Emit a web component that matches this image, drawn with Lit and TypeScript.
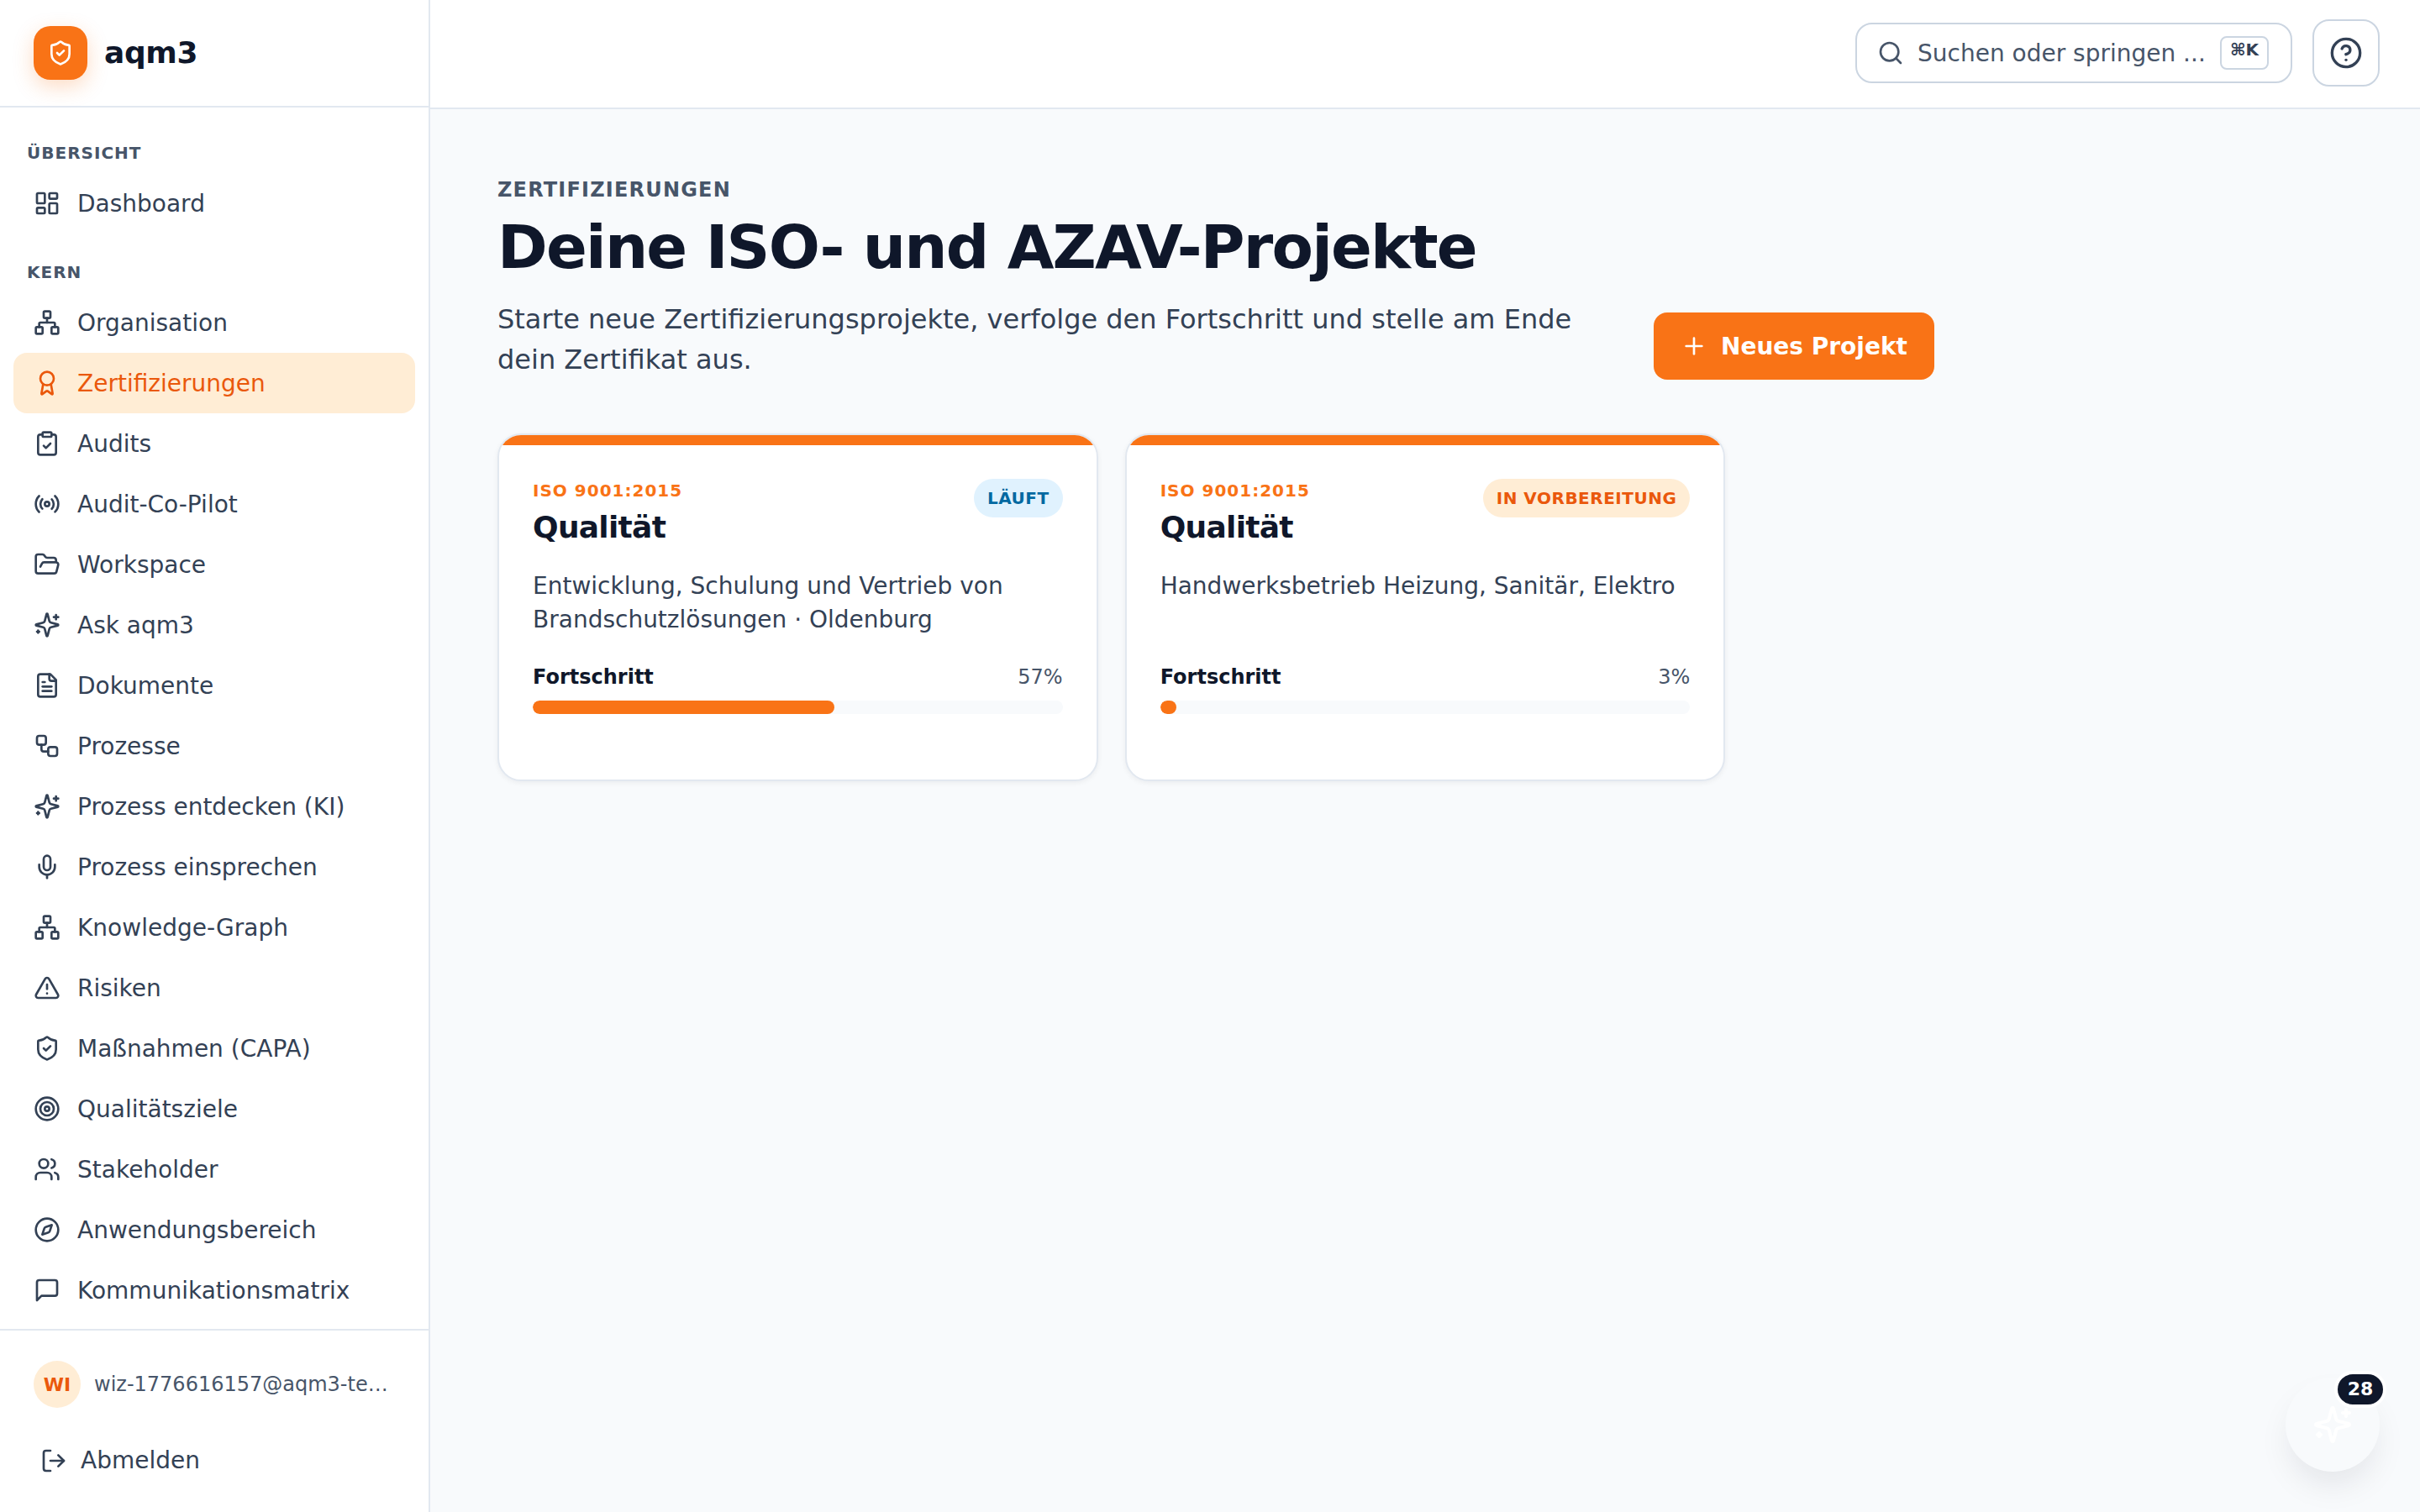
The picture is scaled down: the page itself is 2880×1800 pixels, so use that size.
import { LitElement, html, css, svg } from "lit";
import { customElement } from "lit/decorators.js";

// lucide shapes, keyed by name
const icons: Record<string, unknown> = {
  dashboard: svg`<rect x="3" y="3" width="7" height="9" rx="1"/><rect x="14" y="3" width="7" height="5" rx="1"/><rect x="14" y="12" width="7" height="9" rx="1"/><rect x="3" y="16" width="7" height="5" rx="1"/>`,
  network: svg`<rect x="16" y="16" width="6" height="6" rx="1"/><rect x="2" y="16" width="6" height="6" rx="1"/><rect x="9" y="2" width="6" height="6" rx="1"/><path d="M5 16v-3a1 1 0 0 1 1-1h12a1 1 0 0 1 1 1v3"/><path d="M12 12V8"/>`,
  award: svg`<path d="m15.477 12.89 1.515 8.526a.5.5 0 0 1-.81.47l-3.58-2.687a1 1 0 0 0-1.197 0l-3.586 2.686a.5.5 0 0 1-.81-.469l1.514-8.526"/><circle cx="12" cy="8" r="6"/>`,
  clipboard: svg`<rect x="8" y="2" width="8" height="4" rx="1"/><path d="M16 4h2a2 2 0 0 1 2 2v14a2 2 0 0 1-2 2H6a2 2 0 0 1-2-2V6a2 2 0 0 1 2-2h2"/><path d="m9 14 2 2 4-4"/>`,
  radio: svg`<path d="M4.9 19.1C1 15.2 1 8.8 4.9 4.9"/><path d="M7.8 16.2c-2.3-2.3-2.3-6.1 0-8.5"/><circle cx="12" cy="12" r="2"/><path d="M16.2 7.8c2.3 2.3 2.3 6.1 0 8.5"/><path d="M19.1 4.9C23 8.8 23 15.1 19.1 19"/>`,
  folder: svg`<path d="m6 14 1.5-2.9A2 2 0 0 1 9.24 10H20a2 2 0 0 1 1.94 2.5l-1.54 6a2 2 0 0 1-1.95 1.5H4a2 2 0 0 1-2-2V5a2 2 0 0 1 2-2h3.9a2 2 0 0 1 1.69.9l.81 1.2a2 2 0 0 0 1.67.9H18a2 2 0 0 1 2 2v2"/>`,
  sparkles: svg`<path d="M9.937 15.5A2 2 0 0 0 8.5 14.063l-6.135-1.582a.5.5 0 0 1 0-.962L8.5 9.936A2 2 0 0 0 9.937 8.5l1.582-6.135a.5.5 0 0 1 .963 0L14.063 8.5A2 2 0 0 0 15.5 9.937l6.135 1.581a.5.5 0 0 1 0 .964L15.5 14.063a2 2 0 0 0-1.437 1.437l-1.582 6.135a.5.5 0 0 1-.963 0z"/><path d="M20 3v4"/><path d="M22 5h-4"/><path d="M4 17v2"/><path d="M5 18H3"/>`,
  file: svg`<path d="M15 2H6a2 2 0 0 0-2 2v16a2 2 0 0 0 2 2h12a2 2 0 0 0 2-2V7Z"/><path d="M14 2v4a2 2 0 0 0 2 2h4"/><path d="M10 9H8"/><path d="M16 13H8"/><path d="M16 17H8"/>`,
  workflow: svg`<rect x="3" y="3" width="8" height="8" rx="2"/><path d="M7 11v4a2 2 0 0 0 2 2h4"/><rect x="13" y="13" width="8" height="8" rx="2"/>`,
  mic: svg`<path d="M12 2a3 3 0 0 0-3 3v7a3 3 0 0 0 6 0V5a3 3 0 0 0-3-3Z"/><path d="M19 10v2a7 7 0 0 1-14 0v-2"/><line x1="12" x2="12" y1="19" y2="22"/>`,
  alert: svg`<path d="m21.73 18-8-14a2 2 0 0 0-3.48 0l-8 14A2 2 0 0 0 4 21h16a2 2 0 0 0 1.73-3"/><path d="M12 9v4"/><path d="M12 17h.01"/>`,
  shield: svg`<path d="M20 13c0 5-3.5 7.5-7.66 8.95a1 1 0 0 1-.67-.01C7.5 20.5 4 18 4 13V6a1 1 0 0 1 1-1c2 0 4.5-1.2 6.24-2.72a1.17 1.17 0 0 1 1.52 0C14.51 3.81 17 5 19 5a1 1 0 0 1 1 1z"/><path d="m9 12 2 2 4-4"/>`,
  target: svg`<circle cx="12" cy="12" r="10"/><circle cx="12" cy="12" r="6"/><circle cx="12" cy="12" r="2"/>`,
  users: svg`<path d="M16 21v-2a4 4 0 0 0-4-4H6a4 4 0 0 0-4 4v2"/><circle cx="9" cy="7" r="4"/><path d="M22 21v-2a4 4 0 0 0-3-3.87"/><path d="M16 3.13a4 4 0 0 1 0 7.75"/>`,
  compass: svg`<path d="m16.24 7.76-1.804 5.411a2 2 0 0 1-1.265 1.265L7.76 16.24l1.804-5.411a2 2 0 0 1 1.265-1.265z"/><circle cx="12" cy="12" r="10"/>`,
  message: svg`<path d="M21 15a2 2 0 0 1-2 2H7l-4 4V5a2 2 0 0 1 2-2h14a2 2 0 0 1 2 2z"/>`,
  logout: svg`<path d="M9 21H5a2 2 0 0 1-2-2V5a2 2 0 0 1 2-2h4"/><polyline points="16 17 21 12 16 7"/><line x1="21" x2="9" y1="12" y2="12"/>`,
  search: svg`<circle cx="11" cy="11" r="8"/><path d="m21 21-4.3-4.3"/>`,
  help: svg`<circle cx="12" cy="12" r="10"/><path d="M9.09 9a3 3 0 0 1 5.83 1c0 2-3 3-3 3"/><path d="M12 17h.01"/>`,
  plus: svg`<path d="M5 12h14"/><path d="M12 5v14"/>`,
};

const icon = (name: string, size = 16) => html`<svg
  class="icon"
  width=${size}
  height=${size}
  viewBox="0 0 24 24"
  fill="none"
  stroke="currentColor"
  stroke-width="2"
  stroke-linecap="round"
  stroke-linejoin="round"
>${icons[name]}</svg>`;

const sections = [
  { label: "Übersicht", items: [["Dashboard", "dashboard"]] },
  {
    label: "Kern",
    items: [
      ["Organisation", "network"],
      ["Zertifizierungen", "award"],
      ["Audits", "clipboard"],
      ["Audit-Co-Pilot", "radio"],
      ["Workspace", "folder"],
      ["Ask aqm3", "sparkles"],
      ["Dokumente", "file"],
      ["Prozesse", "workflow"],
      ["Prozess entdecken (KI)", "sparkles"],
      ["Prozess einsprechen", "mic"],
      ["Knowledge-Graph", "network"],
      ["Risiken", "alert"],
      ["Maßnahmen (CAPA)", "shield"],
      ["Qualitätsziele", "target"],
      ["Stakeholder", "users"],
      ["Anwendungsbereich", "compass"],
      ["Kommunikationsmatrix", "message"],
    ],
  },
];

const projects = [
  {
    norm: "ISO 9001:2015",
    title: "Qualität",
    desc: "Entwicklung, Schulung und Vertrieb von Brandschutzlösungen · Oldenburg",
    status: "Läuft",
    tone: "info",
    progress: 57,
  },
  {
    norm: "ISO 9001:2015",
    title: "Qualität",
    desc: "Handwerksbetrieb Heizung, Sanitär, Elektro",
    status: "In Vorbereitung",
    tone: "warn",
    progress: 3,
  },
];

@customElement("app-root")
export class AppRoot extends LitElement {
  static styles = css`
    :host {
      display: grid;
      grid-template-columns: 256px 1fr;
      position: relative;
      zoom: 2;
      width: 1440px;
      height: 900px;
      overflow: hidden;
      background: #f8fafc;
      color: #334155;
      font-family: "DejaVu Sans", sans-serif;
      font-size: 14px;
    }
    .icon {
      flex: none;
      display: block;
    }

    /* sidebar */
    .sidebar {
      display: flex;
      flex-direction: column;
      height: 900px;
      background: #fff;
      border-right: 1px solid #e2e8f0;
      box-sizing: border-box;
    }
    .brand {
      display: flex;
      align-items: center;
      gap: 10px;
      height: 64px;
      flex: none;
      box-sizing: border-box;
      padding: 0 20px;
      border-bottom: 1px solid #e2e8f0;
    }
    .logo {
      display: flex;
      align-items: center;
      justify-content: center;
      width: 32px;
      height: 32px;
      border-radius: 10px;
      background: #f97316;
      color: #fff;
      box-shadow: 0 4px 12px rgba(249, 115, 22, 0.25);
    }
    .brand-name {
      margin-top: -1px;
      font-size: 18px;
      font-weight: 700;
      letter-spacing: -0.01em;
      color: #0f172a;
    }
    .nav {
      flex: 1;
      min-height: 0;
      overflow: hidden;
      padding: 19px 8px 0;
    }
    .section + .section {
      margin-top: 15px;
    }
    .section-label {
      padding: 0 8px;
      height: 16px;
      margin-bottom: 4px;
      line-height: 16px;
      font-size: 10px;
      font-weight: 700;
      letter-spacing: 0.05em;
      text-transform: uppercase;
      color: #475569;
    }
    .item {
      display: flex;
      align-items: center;
      gap: 10px;
      height: 36px;
      padding: 0 12px;
      border-radius: 8px;
      white-space: nowrap;
    }
    .item.active {
      background: #ffedd5;
      color: #ea580c;
    }
    .foot {
      flex: none;
      height: 109px;
      box-sizing: border-box;
      padding: 18px 20px 0;
      border-top: 1px solid #e2e8f0;
    }
    .user {
      display: flex;
      align-items: center;
      gap: 8px;
    }
    .avatar {
      flex: none;
      display: flex;
      align-items: center;
      justify-content: center;
      width: 28px;
      height: 28px;
      border-radius: 50%;
      background: #ffedd5;
      color: #ea580c;
      font-size: 11px;
      font-weight: 700;
    }
    .email {
      min-width: 0;
      flex: 1;
      overflow: hidden;
      text-overflow: ellipsis;
      white-space: nowrap;
      font-size: 12px;
      color: #475569;
    }
    .logout {
      display: flex;
      align-items: center;
      gap: 8px;
      margin: 23px 0 0 4px;
    }

    /* main column */
    .main {
      min-width: 0;
      display: flex;
      flex-direction: column;
    }
    .topbar {
      display: flex;
      align-items: center;
      justify-content: flex-end;
      gap: 12px;
      height: 65px;
      box-sizing: border-box;
      padding: 0 24px 1px;
      background: #fff;
      border-bottom: 1px solid #e2e8f0;
    }
    .search {
      display: flex;
      align-items: center;
      gap: 8px;
      width: 260px;
      height: 36px;
      box-sizing: border-box;
      padding: 0 13px 0 12px;
      background: #fff;
      border: 1px solid #cbd5e1;
      border-radius: 10px;
      color: #475569;
    }
    .search-text {
      flex: 1;
      white-space: nowrap;
    }
    .kbd {
      display: flex;
      justify-content: center;
      width: 29px;
      height: 20px;
      box-sizing: border-box;
      border: 1px solid #cbd5e1;
      border-radius: 4px;
      font-size: 10px;
      line-height: 14px;
      font-weight: 600;
      color: #334155;
    }
    .help {
      display: flex;
      align-items: center;
      justify-content: center;
      width: 40px;
      height: 40px;
      box-sizing: border-box;
      background: #fff;
      border: 1px solid #cbd5e1;
      border-radius: 10px;
    }
    .content {
      padding: 40px 40px 0;
    }
    .eyebrow {
      font-size: 12px;
      line-height: 16px;
      font-weight: 700;
      letter-spacing: 0.05em;
      text-transform: uppercase;
      color: #475569;
    }
    h1 {
      margin: 6px 0 0;
      font-size: 36px;
      line-height: 40px;
      font-weight: 700;
      letter-spacing: -0.025em;
      color: #0f172a;
    }
    .lead {
      display: flex;
      align-items: flex-end;
      gap: 16px;
      margin-top: 11px;
    }
    .lead p {
      margin: 0;
      width: 672px;
      font-size: 16px;
      line-height: 24px;
      color: #334155;
    }
    .new {
      display: flex;
      align-items: center;
      gap: 8px;
      height: 40px;
      padding: 0 16px;
      border-radius: 8px;
      background: #f97316;
      color: #fff;
      font-size: 14px;
      font-weight: 700;
      white-space: nowrap;
    }
    .cards {
      display: grid;
      grid-template-columns: repeat(3, 1fr);
      gap: 16px;
      margin-top: 32px;
    }
    .card {
      height: 207px;
      box-sizing: border-box;
      overflow: hidden;
      background: #fff;
      border: 1px solid #e2e8f0;
      border-radius: 14px;
      box-shadow: 0 1px 3px rgba(15, 23, 42, 0.06);
    }
    .stripe {
      height: 6px;
      background: #f97316;
    }
    .card-body {
      padding: 20px;
    }
    .card-head {
      display: flex;
      justify-content: space-between;
      align-items: flex-start;
      gap: 12px;
    }
    .norm {
      font-size: 10px;
      line-height: 14px;
      font-weight: 700;
      letter-spacing: 0.05em;
      color: #f97316;
    }
    .card-title {
      margin-top: 3px;
      font-size: 18px;
      line-height: 24px;
      font-weight: 700;
      letter-spacing: -0.02em;
      color: #0f172a;
    }
    .badge {
      flex: none;
      padding: 3px 8px;
      border-radius: 999px;
      font-size: 10px;
      line-height: 17px;
      font-weight: 700;
      letter-spacing: 0.025em;
      text-transform: uppercase;
    }
    .badge.info {
      background: #e0f2fe;
      color: #0369a1;
    }
    .badge.warn {
      background: #ffedd5;
      color: #ea580c;
    }
    .desc {
      margin: 13px 0 0;
      height: 40px;
      line-height: 20px;
      color: #334155;
    }
    .progress-head {
      display: flex;
      justify-content: space-between;
      margin-top: 16px;
      font-size: 12px;
      line-height: 16px;
      color: #475569;
    }
    .progress-head b {
      color: #0f172a;
    }
    .track {
      margin-top: 6px;
      height: 8px;
      border-radius: 999px;
      background: #f8fafc;
      overflow: hidden;
    }
    .fill {
      height: 100%;
      border-radius: 999px;
      background: #f97316;
    }

    /* floating assistant button */
    .fab {
      position: absolute;
      right: 24px;
      bottom: 24px;
      display: flex;
      align-items: center;
      justify-content: center;
      width: 56px;
      height: 56px;
      border-radius: 50%;
      background: #f8fafc;
      color: #fff;
      box-shadow: 0 10px 20px -4px rgba(15, 23, 42, 0.1);
    }
    .fab-count {
      position: absolute;
      top: -4px;
      right: -4px;
      min-width: 27px;
      height: 18px;
      box-sizing: content-box;
      border: 2px solid #fff;
      border-radius: 999px;
      background: #0f172a;
      color: #fff;
      font-size: 11px;
      line-height: 18px;
      font-weight: 700;
      text-align: center;
    }
  `;

  render() {
    return html`
      <aside class="sidebar">
        <div class="brand">
          <div class="logo">${icon("shield")}</div>
          <span class="brand-name">aqm3</span>
        </div>
        <nav class="nav">
          ${sections.map(
            (s) => html`<div class="section">
              <div class="section-label">${s.label}</div>
              ${s.items.map(
                ([name, ic]) => html`<div
                  class="item ${name === "Zertifizierungen" ? "active" : ""}"
                >
                  ${icon(ic)}<span>${name}</span>
                </div>`
              )}
            </div>`
          )}
        </nav>
        <div class="foot">
          <div class="user">
            <div class="avatar">WI</div>
            <span class="email">wiz-1776616157@aqm3-test.example</span>
          </div>
          <div class="logout">${icon("logout")}<span>Abmelden</span></div>
        </div>
      </aside>

      <div class="main">
        <header class="topbar">
          <div class="search">
            ${icon("search")}
            <span class="search-text">Suchen oder springen ...</span>
            <span class="kbd">⌘K</span>
          </div>
          <div class="help">${icon("help", 20)}</div>
        </header>
        <main class="content">
          <div class="eyebrow">Zertifizierungen</div>
          <h1>Deine ISO- und AZAV-Projekte</h1>
          <div class="lead">
            <p>
              Starte neue Zertifizierungsprojekte, verfolge den Fortschritt und
              stelle am Ende dein Zertifikat aus.
            </p>
            <div class="new">${icon("plus")}<span>Neues Projekt</span></div>
          </div>
          <div class="cards">
            ${projects.map(
              (p) => html`<article class="card">
                <div class="stripe"></div>
                <div class="card-body">
                  <div class="card-head">
                    <div>
                      <div class="norm">${p.norm}</div>
                      <div class="card-title">${p.title}</div>
                    </div>
                    <span class="badge ${p.tone}">${p.status}</span>
                  </div>
                  <p class="desc">${p.desc}</p>
                  <div class="progress-head">
                    <b>Fortschritt</b><span>${p.progress}%</span>
                  </div>
                  <div class="track">
                    <div class="fill" style="width:${p.progress}%"></div>
                  </div>
                </div>
              </article>`
            )}
          </div>
        </main>
      </div>

      <div class="fab">
        ${icon("sparkles", 24)}
        <span class="fab-count">28</span>
      </div>
    `;
  }
}
